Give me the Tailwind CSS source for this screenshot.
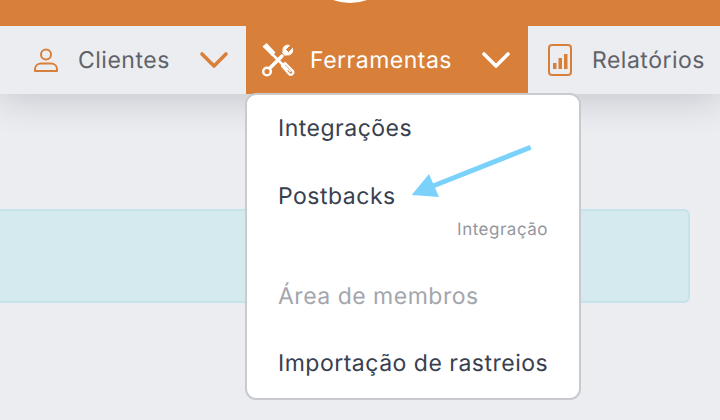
<!DOCTYPE html>
<html lang="pt-BR">
<head>
  <meta charset="UTF-8">
  <title>Ferramentas</title>
  <script src="https://cdn.jsdelivr.net/npm/@tailwindcss/browser@4"></script>
</head>
<body class="w-[720px] h-[420px] overflow-hidden bg-[#ecedf1] font-['Inter',sans-serif] [text-rendering:geometricPrecision]">
  <!-- Barra superior -->
  <div class="relative z-20 h-[26px] bg-[#d87f3a] overflow-hidden">
    <div class="absolute left-[300px] top-[-97px] w-[100px] h-[100px] rounded-full bg-white"></div>
  </div>

  <!-- Menu -->
  <nav class="relative z-10 flex h-[68px] bg-[#ecedf1] shadow-[0_6px_36px_rgba(40,45,60,0.2)] text-[23px] tracking-[0.5px] text-[#5f6369]">
    <div class="flex items-center w-[246px] pl-[34px]">
      <svg class="w-[24px] h-[24px] shrink-0" viewBox="0 0 24 24" fill="none" stroke="#d87f3a" stroke-width="2">
        <circle cx="12" cy="6.500" r="5"/>
        <path d="M1 23v-2c0-3.500 3-5.500 6-5.500h10c3 0 6 2 6 5.500v2z" stroke-linejoin="round"/>
      </svg>
      <span class="ml-[20px]">Clientes</span>
      <svg class="w-[30px] h-[20px] ml-[29px] shrink-0" viewBox="0 0 30 20" fill="none" stroke="#d87f3a" stroke-width="3.600" stroke-linecap="round" stroke-linejoin="round">
        <path d="M3 4l12 12L27 4"/>
      </svg>
    </div>

    <div class="flex items-center w-[282px] bg-[#d87f3a] pl-[15px] text-white">
      <svg class="w-[34px] h-[34px] shrink-0" viewBox="0 0 34 34" fill="none" stroke="#fff" stroke-linecap="round" stroke-linejoin="round">
        <path d="M2.500 3.500l3-2.500 8 8.500-2.500 2.500z" fill="#fff" stroke-width="1.500"/>
        <path d="M11 11l15 15" stroke-width="2.500"/>
        <path d="M24 20l-3 3 7 8c1 1 2.500 1 3.500 0s1-2.500 0-3.500z" stroke-width="2.200"/>
        <path d="M27.500 26.500l2 2" stroke-width="1.500"/>
        <path d="M21 13L9 25" stroke-width="3.500"/>
        <circle cx="6" cy="28.500" r="3.800" stroke-width="2.500"/>
        <path d="M31.500 5.500l-4 4-3-3 4-4c-3-1-6.500 .5-6.500 4 0 1 .2 2-.5 3l2.500 3c1-.7 2-.5 3-.5 3.500 0 5.500-3.500 4.500-6.500z" fill="#fff" stroke-width="1"/>
      </svg>
      <span class="ml-[15px]">Ferramentas</span>
      <svg class="w-[30px] h-[20px] ml-[29px] shrink-0" viewBox="0 0 30 20" fill="none" stroke="#fff" stroke-width="3.600" stroke-linecap="round" stroke-linejoin="round">
        <path d="M3 4l12 12L27 4"/>
      </svg>
    </div>

    <div class="flex items-center flex-1 pl-[20px]">
      <svg class="w-[24px] h-[32px] shrink-0" viewBox="0 0 24 32" fill="none">
        <rect x="1" y="1" width="22" height="30" rx="3" stroke="#d87f3a" stroke-width="2"/>
        <rect x="5" y="19" width="3.500" height="6" fill="#d87f3a"/>
        <rect x="10.500" y="14" width="3.500" height="11" fill="#d87f3a"/>
        <rect x="16" y="10" width="3.500" height="15" fill="#d87f3a"/>
      </svg>
      <span class="ml-[20px]">Relatórios</span>
    </div>
  </nav>

  <!-- Alerta -->
  <main class="pt-[115px] pr-[30px]">
    <div class="h-[94px] rounded-r-md border-2 border-l-0 border-[#c5e3e9] bg-[#d5eaef]"></div>
  </main>

  <!-- Dropdown Ferramentas -->
  <div class="absolute z-20 left-[245px] top-[93px] w-[336px] h-[307px] rounded-[11px] border-2 border-[#c8cacf] bg-white text-[23px] tracking-[0.5px] text-[#39404f]">
    <ul class="pl-[31px] pr-[31px]">
      <li class="h-[34px] mt-[16px] leading-[34px]">Integrações</li>
      <li class="h-[34px] mt-[34px] leading-[34px]">Postbacks</li>
      <li class="h-[24px] mt-[5px] text-right text-[17px] leading-[24px] tracking-[0.5px] text-[#94979e]">Integração</li>
      <li class="h-[34px] mt-[37px] leading-[34px] text-[#a3a6ad]">Área de membros</li>
      <li class="h-[34px] mt-[33px] leading-[34px] whitespace-nowrap">Importação de rastreios</li>
    </ul>
  </div>

  <!-- Seta de destaque -->
  <svg class="absolute z-30 left-[405px] top-[140px] w-[130px] h-[64px]" viewBox="0 0 130 64" fill="none">
    <path d="M125.700 7.300L28 46" stroke="#7ad2fb" stroke-width="5"/>
    <path d="M6.700 55L24 34l10 23z" fill="#7ad2fb"/>
  </svg>
</body>
</html>
